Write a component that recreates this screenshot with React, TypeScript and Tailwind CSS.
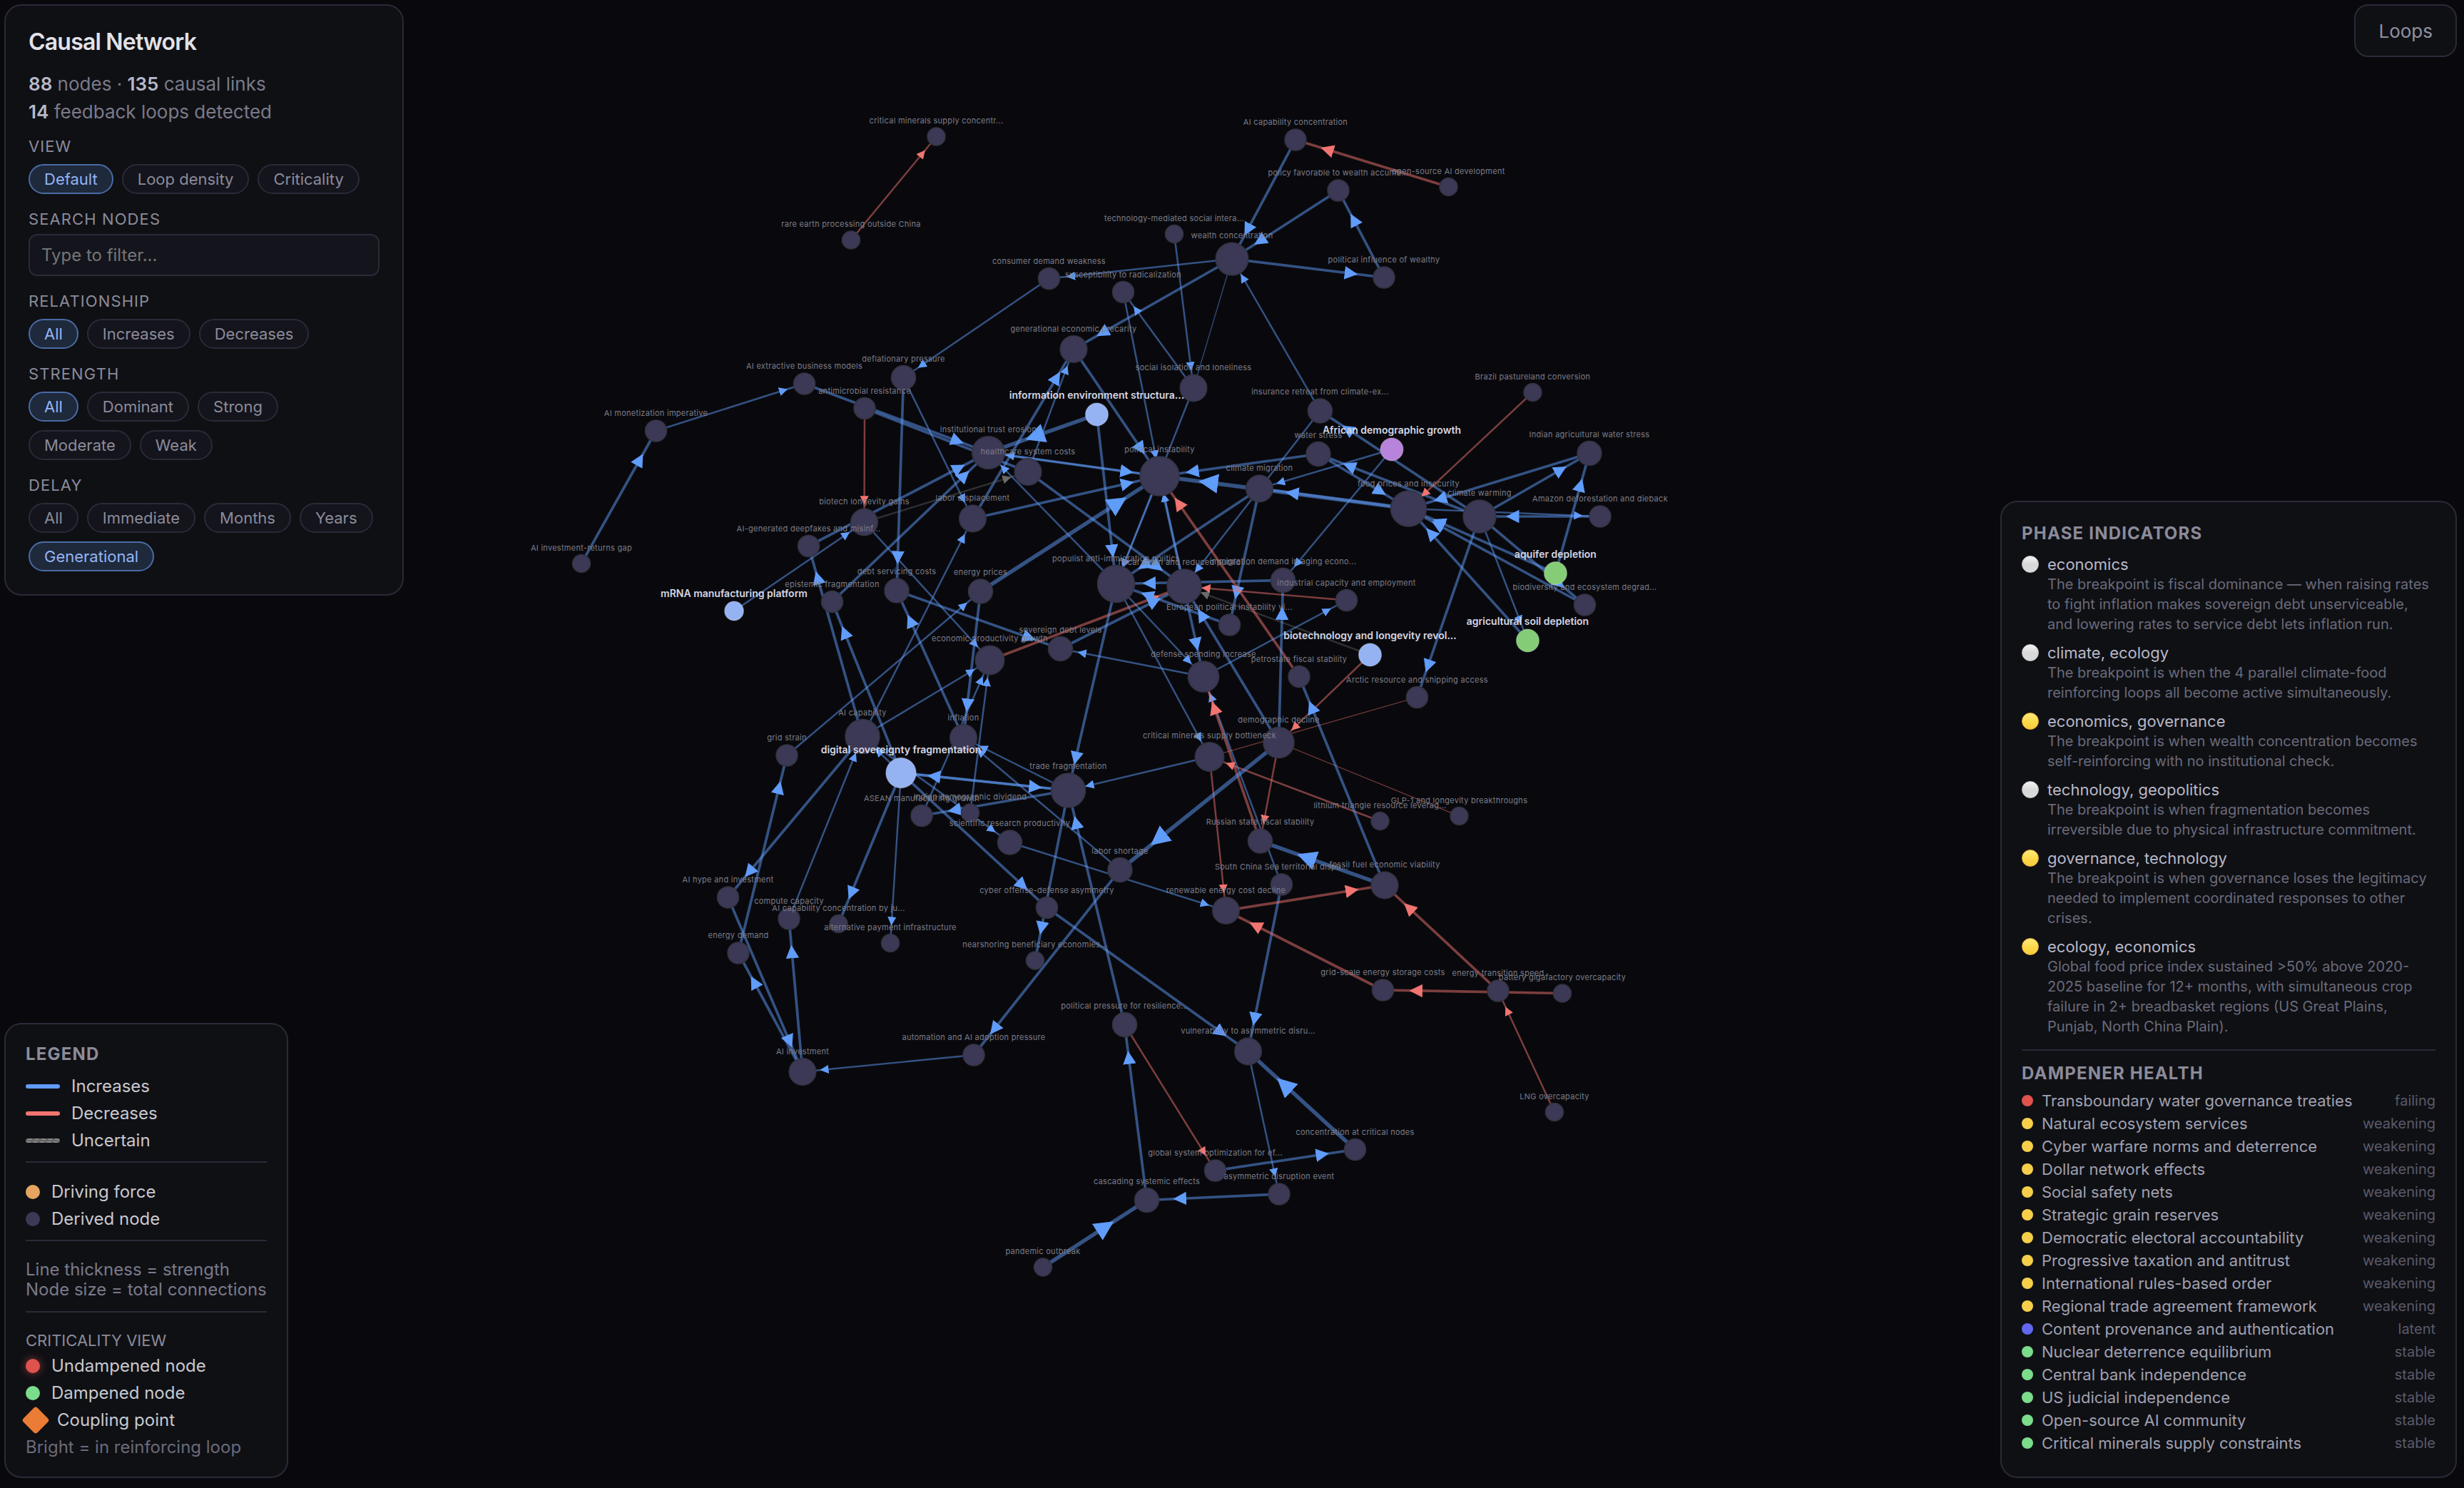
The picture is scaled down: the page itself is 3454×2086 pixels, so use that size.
import { useState } from "react";

type Tone = "up" | "down" | "unsure";

type GraphNode = {
  id: string;
  label: string;
  x: number;
  y: number;
  r: number;
  force?: string;
};

const n = (id: string, label: string, x: number, y: number, r: number, force?: string): GraphNode => ({
  id,
  label,
  x,
  y,
  r,
  force,
});

const nodes: GraphNode[] = [
  n("critConc", "critical minerals supply concentr...", 1312.5, 191.5, 12.5),
  n("rareEarth", "rare earth processing outside China", 1193, 336.5, 12.5),
  n("consumer", "consumer demand weakness", 1470.5, 390.5, 15),
  n("aiExtract", "AI extractive business models", 1127.5, 538, 15),
  n("deflation", "deflationary pressure", 1266.5, 529.5, 17),
  n("antimicro", "antimicrobial resistance", 1212, 572.5, 15),
  n("aiMonet", "AI monetization imperative", 919.5, 604, 15),
  n("trust", "institutional trust erosion", 1385.5, 634.5, 22.8),
  n("health", "healthcare system costs", 1441, 661.5, 18.8),
  n("precarity", "generational economic precarity", 1505, 489.5, 18.8),
  n("aiCapConc", "AI capability concentration", 1816, 196, 15),
  n("openSource", "open-source AI development", 2030.5, 262, 12.5),
  n("policy", "policy favorable to wealth accumu...", 1876, 267, 15),
  n("techMed", "technology-mediated social intera...", 1646, 328, 12.5),
  n("wealth", "wealth concentration", 1727, 363, 22.8),
  n("polInfl", "political influence of wealthy", 1940, 389, 15),
  n("radical", "susceptibility to radicalization", 1574.5, 409.5, 15),
  n("isolation", "social isolation and loneliness", 1673, 544, 18.8),
  n("insurance", "insurance retreat from climate-ex...", 1850.5, 576, 17),
  n("brazil", "Brazil pastureland conversion", 2148.5, 550, 12.5),
  n("infoEnv", "information environment structura...", 1537.5, 581, 16, "#95b3f3"),
  n("african", "African demographic growth", 1951, 630, 16, "#b883da"),
  n("water", "water stress", 1848, 636.5, 17),
  n("instability", "political instability", 1625.5, 667.5, 27.5),
  n("migration", "climate migration", 1765.5, 685, 18.8),
  n("food", "food prices and insecurity", 1974.5, 713, 25),
  n("warming", "climate warming", 2074, 724, 23),
  n("indianWater", "Indian agricultural water stress", 2228, 635.5, 17),
  n("amazon", "Amazon deforestation and dieback", 2243, 724, 15),
  n("aquifer", "aquifer depletion", 2180.5, 803.5, 16, "#85cc77"),
  n("biodiv", "biodiversity and ecosystem degrad...", 2221.5, 848, 15),
  n("soil", "agricultural soil depletion", 2141.5, 898, 16, "#85cc77"),
  n("longevity", "biotechnology and longevity revol...", 1920.5, 918, 16, "#95b3f3"),
  n("industrial", "industrial capacity and employment", 1887.5, 841.5, 15),
  n("arctic", "Arctic resource and shipping access", 1986.5, 977.5, 15),
  n("lithium", "lithium triangle resource leverag...", 1934.5, 1151, 12.5),
  n("glp", "GLP-1 and longevity breakthroughs", 2045.5, 1144, 12.5),
  n("populist", "populist anti-immigration politics", 1564.5, 818.5, 26),
  n("fiscal", "fiscal strain and reduced public ...", 1660, 822, 24),
  n("immigration", "immigration demand in aging econo...", 1798.5, 813.5, 17),
  n("european", "European political instability vi...", 1723.5, 876, 15),
  n("sovDebt", "sovereign debt levels", 1486.5, 909.5, 17),
  n("defense", "defense spending increase", 1687, 948.5, 21.6),
  n("petro", "petrostate fiscal stability", 1821, 948.5, 15),
  n("demoDecline", "demographic decline", 1792.5, 1041, 21.6),
  n("critMin", "critical minerals supply bottleneck", 1695.5, 1061, 20.2),
  n("trade", "trade fragmentation", 1497.5, 1108, 24),
  n("russian", "Russian state fiscal stability", 1766.5, 1179, 17),
  n("laborShort", "labor shortage", 1570, 1219.5, 17),
  n("scs", "South China Sea territorial dispu...", 1796.5, 1240, 15),
  n("fossil", "fossil fuel economic viability", 1941, 1241, 18.8),
  n("renewable", "renewable energy cost decline", 1718.5, 1276.5, 18.8),
  n("gridScale", "grid-scale energy storage costs", 1938.5, 1388, 15),
  n("transition", "energy transition speed", 2100, 1389, 15),
  n("battery", "battery gigafactory overcapacity", 2190, 1392.5, 12.5),
  n("polPress", "political pressure for resilience...", 1576.5, 1436.5, 17),
  n("vuln", "vulnerability to asymmetric disru...", 1749.5, 1474, 18.8),
  n("lng", "LNG overcapacity", 2179, 1559, 12.5),
  n("concNodes", "concentration at critical nodes", 1899.5, 1611.5, 15),
  n("globalOpt", "global system optimization for ef...", 1703.5, 1641, 15),
  n("asymEvent", "asymmetric disruption event", 1793, 1674, 15),
  n("cascading", "cascading systemic effects", 1607.5, 1682.5, 17),
  n("aiHype", "AI hype and investment", 1020.5, 1258, 15),
  n("compute", "compute capacity", 1106, 1288, 15),
  n("aiCapJu", "AI capability concentration by ju...", 1175.5, 1295, 12.5),
  n("energyDemand", "energy demand", 1035, 1336, 15),
  n("altPay", "alternative payment infrastructure", 1248, 1322, 12.5),
  n("cyber", "cyber offense-defense asymmetry", 1467.5, 1272.5, 15),
  n("nearshore", "nearshoring beneficiary economies...", 1451, 1346.5, 12.5),
  n("aiInvest", "AI investment", 1125, 1502.5, 18.8),
  n("automation", "automation and AI adoption pressure", 1365, 1479, 15),
  n("pandemic", "pandemic outbreak", 1462, 1776.5, 12.5),
  n("longGains", "biotech longevity gains", 1211.5, 732, 18.8),
  n("deepfakes", "AI-generated deepfakes and misinf...", 1133.5, 765.5, 15),
  n("laborDisp", "labor displacement", 1363.5, 727, 18.8),
  n("debtServ", "debt servicing costs", 1257, 828, 17),
  n("energyPrices", "energy prices", 1374.5, 829, 17),
  n("epistemic", "epistemic fragmentation", 1166.5, 843.5, 15),
  n("mrna", "mRNA manufacturing platform", 1029, 856.5, 13.4, "#95b3f3"),
  n("prodGrowth", "economic productivity growth", 1387.5, 925.5, 20.2),
  n("aiCap", "AI capability", 1209, 1032.5, 24),
  n("inflation", "inflation", 1350.5, 1034.5, 18.8),
  n("gridStrain", "grid strain", 1103, 1059, 15),
  n("digital", "digital sovereignty fragmentation", 1263, 1083.5, 21.2, "#95b3f3"),
  n("asean", "ASEAN manufacturing growth", 1292, 1143.5, 15),
  n("indianDemo", "Indian demographic dividend", 1360, 1139.5, 12.5),
  n("sciRes", "scientific research productivity", 1415.5, 1181, 17),
  n("returnsGap", "AI investment-returns gap", 815, 790, 12.5),
];

// strength 1 = weak ... 4 = dominant
const links: [string, string, number, Tone?][] = [
  ["rareEarth", "critConc", 2, "down"],
  ["openSource", "aiCapConc", 3, "down"],
  ["aiCapConc", "wealth", 3],
  ["policy", "wealth", 3],
  ["polInfl", "policy", 3],
  ["wealth", "polInfl", 3],
  ["wealth", "consumer", 2],
  ["wealth", "precarity", 3],
  ["wealth", "isolation", 1],
  ["isolation", "radical", 2],
  ["techMed", "isolation", 2],
  ["radical", "instability", 2],
  ["isolation", "populist", 2],
  ["instability", "populist", 2],
  ["fiscal", "instability", 2],
  ["instability", "defense", 3],
  ["insurance", "wealth", 2],
  ["consumer", "deflation", 2],
  ["aiMonet", "aiExtract", 2],
  ["returnsGap", "aiMonet", 3],
  ["aiExtract", "trust", 3],
  ["antimicro", "health", 3],
  ["deflation", "debtServ", 3],
  ["deflation", "laborDisp", 2],
  ["antimicro", "longGains", 2, "down"],
  ["infoEnv", "trust", 4],
  ["infoEnv", "populist", 3],
  ["precarity", "instability", 3],
  ["laborDisp", "precarity", 3],
  ["health", "precarity", 2],
  ["instability", "trust", 2],
  ["trust", "instability", 3],
  ["laborDisp", "instability", 3],
  ["energyPrices", "instability", 4],
  ["longGains", "health", 2, "unsure"],
  ["deepfakes", "trust", 3],
  ["epistemic", "trust", 3],
  ["populist", "trust", 2],
  ["health", "fiscal", 3],
  ["mrna", "longGains", 2],
  ["longGains", "prodGrowth", 2],
  ["debtServ", "sovDebt", 3],
  ["inflation", "debtServ", 3],
  ["energyPrices", "inflation", 3],
  ["gridStrain", "energyPrices", 2],
  ["aiCap", "laborDisp", 2],
  ["aiCap", "deepfakes", 3],
  ["digital", "epistemic", 3],
  ["aiCap", "prodGrowth", 2],
  ["asean", "prodGrowth", 2],
  ["indianDemo", "prodGrowth", 2],
  ["prodGrowth", "fiscal", 3, "down"],
  ["sovDebt", "fiscal", 3],
  ["european", "populist", 3],
  ["immigration", "populist", 3],
  ["migration", "populist", 3],
  ["insurance", "fiscal", 2],
  ["migration", "european", 3],
  ["african", "migration", 2],
  ["african", "immigration", 2],
  ["warming", "insurance", 3],
  ["water", "instability", 3],
  ["water", "food", 3],
  ["warming", "water", 3],
  ["food", "instability", 4],
  ["food", "migration", 3],
  ["indianWater", "food", 3],
  ["amazon", "warming", 3],
  ["food", "amazon", 2],
  ["warming", "indianWater", 3],
  ["aquifer", "indianWater", 3],
  ["aquifer", "food", 3],
  ["biodiv", "food", 3],
  ["soil", "food", 3],
  ["warming", "biodiv", 3],
  ["warming", "soil", 2],
  ["warming", "arctic", 3],
  ["brazil", "food", 2, "down"],
  ["longevity", "fiscal", 2, "unsure"],
  ["longevity", "demoDecline", 2, "down"],
  ["arctic", "critMin", 1, "down"],
  ["glp", "demoDecline", 1, "down"],
  ["lithium", "critMin", 2, "down"],
  ["critMin", "renewable", 2, "down"],
  ["demoDecline", "russian", 2, "down"],
  ["scs", "defense", 2],
  ["russian", "defense", 3, "down"],
  ["fossil", "russian", 4],
  ["fossil", "petro", 3],
  ["petro", "instability", 3, "down"],
  ["industrial", "fiscal", 2, "down"],
  ["defense", "industrial", 2],
  ["defense", "sovDebt", 2],
  ["populist", "defense", 2],
  ["populist", "critMin", 2],
  ["populist", "trade", 3],
  ["critMin", "trade", 2],
  ["demoDecline", "laborShort", 4],
  ["demoDecline", "fiscal", 3],
  ["demoDecline", "immigration", 3],
  ["polPress", "trade", 3],
  ["trade", "nearshore", 3],
  ["digital", "trade", 3],
  ["trade", "digital", 3],
  ["trade", "asean", 3],
  ["trade", "inflation", 2],
  ["laborShort", "inflation", 2],
  ["aiCap", "sciRes", 2],
  ["digital", "aiCap", 2],
  ["digital", "cyber", 3],
  ["digital", "aiCapJu", 3],
  ["digital", "altPay", 2],
  ["aiCap", "aiHype", 3],
  ["compute", "aiCap", 2],
  ["aiInvest", "compute", 3],
  ["aiInvest", "energyDemand", 3],
  ["aiHype", "aiInvest", 3],
  ["energyDemand", "gridStrain", 3],
  ["automation", "aiInvest", 2],
  ["laborShort", "automation", 3],
  ["sciRes", "renewable", 2],
  ["cyber", "vuln", 3],
  ["scs", "vuln", 3],
  ["concNodes", "vuln", 4],
  ["vuln", "asymEvent", 2],
  ["asymEvent", "cascading", 3],
  ["pandemic", "cascading", 4],
  ["cascading", "polPress", 3],
  ["polPress", "globalOpt", 2, "down"],
  ["globalOpt", "concNodes", 3],
  ["renewable", "fossil", 3, "down"],
  ["gridScale", "renewable", 3, "down"],
  ["transition", "fossil", 3, "down"],
  ["battery", "gridScale", 3, "down"],
  ["lng", "transition", 2, "down"],
];

const strokeWidths = [0, 1.2, 2.45, 3.7, 5.5];
const toneColors: Record<Tone, string> = { up: "#609cfa", down: "#f07470", unsure: "#6a6a6a" };
const nodeById = new Map(nodes.map((node) => [node.id, node]));

const filterGroups = [
  { key: "relationship", title: "Relationship", options: ["All", "Increases", "Decreases"] },
  { key: "strength", title: "Strength", options: ["All", "Dominant", "Strong", "Moderate", "Weak"] },
  { key: "delay", title: "Delay", options: ["All", "Immediate", "Months", "Years", "Generational"] },
];

const phases = [
  {
    name: "economics",
    active: false,
    text: "The breakpoint is fiscal dominance — when raising rates to fight inflation makes sovereign debt unserviceable, and lowering rates to service debt lets inflation run.",
  },
  {
    name: "climate, ecology",
    active: false,
    text: "The breakpoint is when the 4 parallel climate-food reinforcing loops all become active simultaneously.",
  },
  {
    name: "economics, governance",
    active: true,
    text: "The breakpoint is when wealth concentration becomes self-reinforcing with no institutional check.",
  },
  {
    name: "technology, geopolitics",
    active: false,
    text: "The breakpoint is when fragmentation becomes irreversible due to physical infrastructure commitment.",
  },
  {
    name: "governance, technology",
    active: true,
    text: "The breakpoint is when governance loses the legitimacy needed to implement coordinated responses to other crises.",
  },
  {
    name: "ecology, economics",
    active: true,
    text: "Global food price index sustained >50% above 2020-2025 baseline for 12+ months, with simultaneous crop failure in 2+ breadbasket regions (US Great Plains, Punjab, North China Plain).",
  },
];

const dampeners = [
  ["Transboundary water governance treaties", "failing"],
  ["Natural ecosystem services", "weakening"],
  ["Cyber warfare norms and deterrence", "weakening"],
  ["Dollar network effects", "weakening"],
  ["Social safety nets", "weakening"],
  ["Strategic grain reserves", "weakening"],
  ["Democratic electoral accountability", "weakening"],
  ["Progressive taxation and antitrust", "weakening"],
  ["International rules-based order", "weakening"],
  ["Regional trade agreement framework", "weakening"],
  ["Content provenance and authentication", "latent"],
  ["Nuclear deterrence equilibrium", "stable"],
  ["Central bank independence", "stable"],
  ["US judicial independence", "stable"],
  ["Open-source AI community", "stable"],
  ["Critical minerals supply constraints", "stable"],
];

const statusColors: Record<string, string> = {
  failing: "bg-[#e0524d]",
  weakening: "bg-[#f5cf4a]",
  latent: "bg-[#6366f1]",
  stable: "bg-[#7bdc8b]",
};

const panel = "border-2 border-[#2a2a38] bg-[#0f1014] rounded-[24px]";

function Graph() {
  return (
    <svg
      viewBox="0 0 3454 2086"
      className="absolute inset-0 h-full w-full"
      role="img"
      aria-label="Causal network graph"
    >
      <defs>
        {(Object.keys(toneColors) as Tone[]).map((tone) => (
          <marker
            key={tone}
            id={`arrow-${tone}`}
            viewBox="0 -5 10 10"
            refX="30"
            markerWidth="5"
            markerHeight="5"
            orient="auto"
          >
            <path d="M0,-5L10,0L0,5" fill={toneColors[tone]} />
          </marker>
        ))}
      </defs>
      <g>
        {links.map(([from, to, strength, tone = "up"]) => {
          const a = nodeById.get(from)!;
          const b = nodeById.get(to)!;
          return (
            <line
              key={`${from}-${to}`}
              x1={a.x}
              y1={a.y}
              x2={b.x}
              y2={b.y}
              stroke={toneColors[tone]}
              strokeOpacity={tone === "unsure" ? 0.4 : 0.5}
              strokeWidth={strokeWidths[strength]}
              markerEnd={`url(#arrow-${tone})`}
            />
          );
        })}
      </g>
      <g>
        {nodes.map((node) => (
          <circle
            key={node.id}
            cx={node.x}
            cy={node.y}
            r={node.r}
            fill={node.force ?? "#3c3957"}
            stroke={node.force ? "#ffffff" : "#33333f"}
            strokeOpacity={node.force ? 0.2 : 1}
            strokeWidth={1.5}
          />
        ))}
      </g>
      <g textAnchor="middle">
        {nodes.map((node) => (
          <text
            key={node.id}
            x={node.x}
            y={node.y - node.r - 6}
            className={node.force ? "text-[14px] font-semibold" : "text-[11px] tracking-wide"}
            fill={node.force ? "#d6d6e2" : "#7c7c88"}
          >
            {node.label}
          </text>
        ))}
      </g>
    </svg>
  );
}

function Pills({
  options,
  value,
  onChange,
}: {
  options: string[];
  value: string;
  onChange: (option: string) => void;
}) {
  return (
    <div className="mt-3 flex flex-wrap gap-3">
      {options.map((option) => (
        <button
          key={option}
          onClick={() => onChange(option)}
          className={`h-[42px] rounded-full border-2 px-5 text-[22px] leading-[26px] ${
            option === value
              ? "border-[#4a6ba5] bg-[#1e293b] text-[#93b4f5]"
              : "border-[#2a2a38] bg-[#14141c] text-[#8b8b9a]"
          }`}
        >
          {option}
        </button>
      ))}
    </div>
  );
}

function GroupTitle({ children }: { children: string }) {
  return (
    <h2 className="text-[22px] leading-[26px] tracking-wider text-[#8b8b9a] uppercase">{children}</h2>
  );
}

function Controls() {
  const [view, setView] = useState("Default");
  const [filters, setFilters] = useState<Record<string, string>>({
    relationship: "All",
    strength: "All",
    delay: "Generational",
  });

  return (
    <section className={`${panel} w-[560px] p-8`}>
      <h1 className="mb-5 text-[32px] leading-[38px] font-semibold tracking-tight text-[#e2e2e8]">
        Causal Network
      </h1>
      <p className="mb-4 text-[26px] leading-[39px] text-[#7a7a8a]">
        <strong className="font-semibold text-[#b8b8c8]">88</strong> nodes ·{" "}
        <strong className="font-semibold text-[#b8b8c8]">135</strong> causal links
        <br />
        <strong className="font-semibold text-[#b8b8c8]">14</strong> feedback loops detected
      </p>
      <div className="flex flex-col gap-[22px]">
        <div>
          <GroupTitle>View</GroupTitle>
          <Pills options={["Default", "Loop density", "Criticality"]} value={view} onChange={setView} />
        </div>
        <div>
          <label
            htmlFor="search"
            className="block text-[22px] leading-[26px] tracking-wider text-[#8b8b9a] uppercase"
          >
            Search nodes
          </label>
          <input
            id="search"
            type="text"
            placeholder="Type to filter..."
            className="mt-2 block h-[59px] w-full rounded-xl border-2 border-[#2a2a38] bg-[#14141c] px-4 text-[24px] text-[#c8c8d0] placeholder-[#757575] outline-none"
          />
        </div>
        {filterGroups.map((group) => (
          <div key={group.key}>
            <GroupTitle>{group.title}</GroupTitle>
            <Pills
              options={group.options}
              value={filters[group.key]}
              onChange={(option) => setFilters({ ...filters, [group.key]: option })}
            />
          </div>
        ))}
      </div>
    </section>
  );
}

function LegendRow({ swatch, label }: { swatch: string; label: string }) {
  return (
    <li className="flex h-[30px] items-center gap-4">
      <span className={swatch} />
      {label}
    </li>
  );
}

function Legend() {
  return (
    <section className={`${panel} w-[398px] p-7 text-[24px] leading-[30px] text-[#c8c8d0]`}>
      <h2 className="mb-4 leading-[28px] font-bold tracking-wider text-[#8b8b9a] uppercase">Legend</h2>
      <ul className="flex flex-col gap-2">
        <LegendRow swatch="h-1.5 w-12 rounded-[3px] bg-[#609cfa]" label="Increases" />
        <LegendRow swatch="h-1.5 w-12 rounded-[3px] bg-[#f07470]" label="Decreases" />
        <LegendRow
          swatch="h-1.5 w-12 rounded-[3px] border-2 border-dashed border-[#888888] bg-[#666666]"
          label="Uncertain"
        />
      </ul>
      <hr className="mt-3.5 mb-[26px] border-t-2 border-[#2a2a38]" />
      <ul className="flex flex-col gap-2">
        <LegendRow swatch="size-5 rounded-full bg-[#e5a560]" label="Driving force" />
        <LegendRow swatch="size-5 rounded-full bg-[#3c3957]" label="Derived node" />
      </ul>
      <hr className="mt-3.5 mb-[26px] border-t-2 border-[#2a2a38]" />
      <p className="leading-[28px] whitespace-nowrap text-[#7a7a8a]">
        Line thickness = strength
        <br />
        Node size = total connections
      </p>
      <hr className="mt-4 mb-[26px] border-t-2 border-[#2a2a38]" />
      <h3 className="mb-2 text-[22px] leading-[26px] text-[#8b8b9a] uppercase">Criticality view</h3>
      <ul className="flex flex-col gap-2">
        <LegendRow
          swatch="size-5 rounded-full bg-[#e0524d] shadow-[0_0_12px_#e0524d99]"
          label="Undampened node"
        />
        <LegendRow swatch="size-5 rounded-full bg-[#7bdc8b]" label="Dampened node" />
        <LegendRow swatch="size-7 rotate-45 rounded-[4px] bg-[#ea7c35]" label="Coupling point" />
      </ul>
      <p className="mt-2.5 leading-[26px] text-[#6a6a7a]">Bright = in reinforcing loop</p>
    </section>
  );
}

function Status() {
  return (
    <section className={`${panel} w-[640px] px-7 pt-[30px] pb-[33px]`}>
      <h2 className="mb-[15px] text-[24px] leading-[28px] font-bold tracking-wider text-[#8b8b9a] uppercase">
        Phase indicators
      </h2>
      <ul className="flex flex-col gap-3">
        {phases.map((phase) => (
          <li key={phase.name} className="flex gap-3">
            <span
              className={`mt-0.5 size-6 shrink-0 rounded-full bg-linear-to-b ${
                phase.active
                  ? "border border-[#e5a93a] from-[#ffea7a] via-[#fbdb4b] to-[#f8cb3e]"
                  : "border border-[#c4c4c4] from-[#f4f4f4] via-[#d8d8d8] to-[#dadada]"
              }`}
            />
            <div>
              <h3 className="text-[22px] leading-[28px] text-[#b8b8c8]">{phase.name}</h3>
              <p className="text-[20px] leading-[28px] text-[#6a6a7a]">{phase.text}</p>
            </div>
          </li>
        ))}
      </ul>
      <hr className="my-[18px] border-t-2 border-[#2a2a38]" />
      <h2 className="mb-2.5 text-[24px] leading-[28px] font-bold tracking-wider text-[#8b8b9a] uppercase">
        Dampener health
      </h2>
      <ul className="flex flex-col gap-1">
        {dampeners.map(([name, status]) => (
          <li key={name} className="flex h-7 items-center gap-3 text-[22px] text-[#a0a0b0]">
            <span className={`size-4 rounded-full ${statusColors[status]}`} />
            <span className="flex-1">{name}</span>
            <span className="text-[20px] text-[#5a5a6a]">{status}</span>
          </li>
        ))}
      </ul>
    </section>
  );
}

export default function App() {
  return (
    <main className="relative min-h-screen bg-[#09090d] font-['Inter',sans-serif]">
      <Graph />
      <div className="relative flex min-h-screen justify-between pt-1.5 pr-2.5 pb-3.5 pl-1.5">
        <div className="flex flex-col justify-between gap-6">
          <Controls />
          <Legend />
        </div>
        <div className="flex flex-col items-end justify-between gap-6">
          <button className="h-[74px] rounded-[20px] border-2 border-[#2a2a38] bg-[#0f1014] px-8 text-[26px] text-[#9090a0]">
            Loops
          </button>
          <Status />
        </div>
      </div>
    </main>
  );
}
